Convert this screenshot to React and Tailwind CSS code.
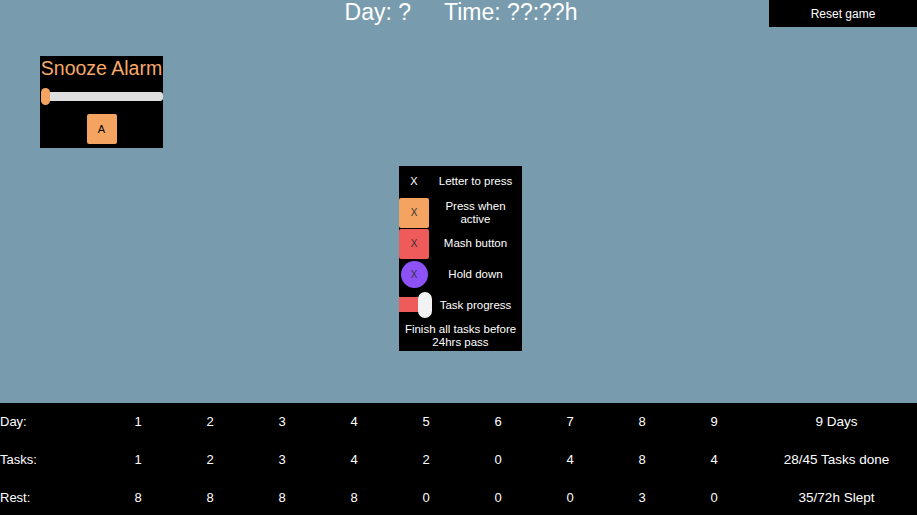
import React from "react";

const days = [1, 2, 3, 4, 5, 6, 7, 8, 9];
const tasks = [1, 2, 3, 4, 2, 0, 4, 8, 4];
const rest = [8, 8, 8, 8, 0, 0, 0, 3, 0];

function StatRow({ label, values, total }) {
    return (
        <div className="grid grid-cols-[102px_repeat(9,72px)_1fr] h-[38px] items-center text-[13px] text-white">
            <span>{label}</span>
            {values.map((v, i) => (
                <span key={i} className="text-center">{v}</span>
            ))}
            <span className="text-center pl-[6px] text-[13.5px]">{total}</span>
        </div>
    );
}

function LegendRow({ icon, children }) {
    return (
        <div className="flex items-center h-[31px]">
            <div className="w-[30px] h-full flex items-center justify-center relative">{icon}</div>
            <div className="flex-1 text-center text-[11.5px] leading-[13px] text-white">{children}</div>
        </div>
    );
}

export default function App() {
    return (
        <div className="w-[917px] h-[515px] overflow-hidden flex flex-col bg-[#789cae]" style={{ fontFamily: '"Liberation Sans", Arial, sans-serif' }}>
            {/* Top bar */}
            <div className="flex h-[27px] shrink-0">
                <div className="flex-1" />
                <div className="flex gap-[33px] text-[23px] leading-[25px] text-white ml-[5px]">
                    <span>Day: ?</span>
                    <span>Time: ??:??h</span>
                </div>
                <div className="flex-1 flex justify-end">
                    <button className="w-[148px] h-[27px] bg-black text-white text-[12px]">Reset game</button>
                </div>
            </div>

            {/* Play area */}
            <div className="flex-1 grid grid-cols-[1fr_auto_1fr]">
                <div className="pl-[40px] pt-[29px]">
                    <div className="w-[123px] h-[92px] bg-black flex flex-col">
                        <p className="text-[19.5px] leading-[22px] text-[#f6a86a] text-center mt-[1px] whitespace-nowrap">Snooze Alarm</p>
                        <div className="relative mt-[9px] h-[17px] flex items-center">
                            <div className="ml-[4px] w-[119px] h-[9px] rounded-[3px] bg-[#dedede]" />
                            <div className="absolute left-[1px] top-0 w-[9px] h-[17px] rounded-full bg-[#f4a460]" />
                        </div>
                        <div className="flex justify-center mt-[9px]">
                            <div className="w-[30px] h-[30px] rounded-[2px] bg-[#f4a460] flex items-center justify-center text-[11px] text-black">A</div>
                        </div>
                    </div>
                </div>

                <div className="pt-[139px] ml-[4px]">
                    <div className="w-[123px] h-[185px] bg-black flex flex-col">
                        <LegendRow icon={<span className="text-[11px] text-white">X</span>}>Letter to press</LegendRow>
                        <LegendRow icon={<div className="w-[30px] h-[30px] rounded-[2px] bg-[#f4a460] flex items-center justify-center text-[10px] text-[#333]">X</div>}>
                            Press when<br />active
                        </LegendRow>
                        <LegendRow icon={<div className="w-[30px] h-[30px] rounded-[2px] bg-[#ef5b5b] flex items-center justify-center text-[10px] text-[#333]">X</div>}>Mash button</LegendRow>
                        <LegendRow icon={<div className="w-[27px] h-[27px] rounded-full bg-[#8c52f5] flex items-center justify-center text-[10px] text-[#333]">X</div>}>Hold down</LegendRow>
                        <LegendRow
                            icon={
                                <>
                                    <div className="absolute left-0 top-[7px] w-[21px] h-[15px] bg-[#ef5b5b]" />
                                    <div className="absolute left-[19px] top-[2px] w-[14px] h-[26px] rounded-full bg-[#f2f2f2]" />
                                </>
                            }
                        >
                            Task progress
                        </LegendRow>
                        <p className="mt-[2px] text-center text-[11.5px] leading-[13px] text-white whitespace-nowrap">Finish all tasks before<br />24hrs pass</p>
                    </div>
                </div>
                <div />
            </div>

            {/* Stats */}
            <div className="bg-black shrink-0 h-[112px]">
                <StatRow label="Day:" values={days} total="9 Days" />
                <StatRow label="Tasks:" values={tasks} total="28/45 Tasks done" />
                <StatRow label="Rest:" values={rest} total="35/72h Slept" />
            </div>
        </div>
    );
}
